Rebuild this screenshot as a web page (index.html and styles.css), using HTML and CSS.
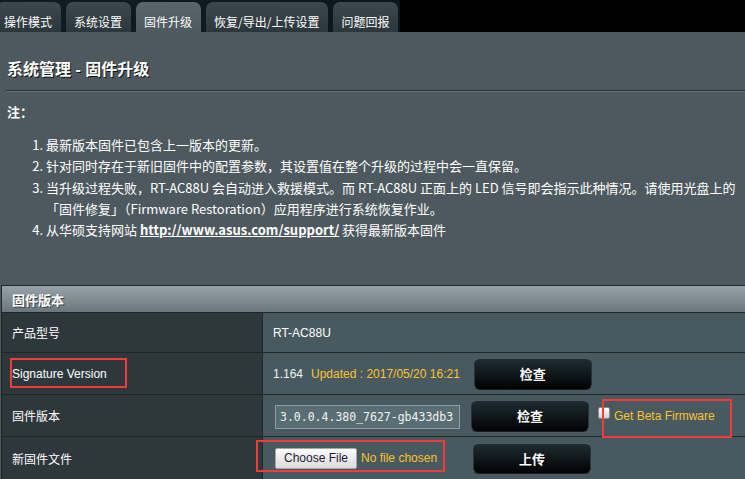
FILE: index.html
```html
<!DOCTYPE html>
<html lang="zh-CN">
<head>
<meta charset="utf-8">
<title>系统管理 - 固件升级</title>
<link rel="stylesheet" href="styles.css">
</head>
<body>
<div class="page">
  <nav class="tabs">
    <span class="tab tab-first">操作模式</span>
    <span class="tab">系统设置</span>
    <span class="tab tab-active">固件升级</span>
    <span class="tab">恢复/导出/上传设置</span>
    <span class="tab">问题回报</span>
  </nav>
  <main class="content">
    <h1 class="title">系统管理 - 固件升级</h1>
    <div class="sep"></div>
    <p class="note-label">注：</p>
    <ol class="notes">
      <li>最新版本固件已包含上一版本的更新。</li>
      <li>针对同时存在于新旧固件中的配置参数，其设置值在整个升级的过程中会一直保留。</li>
      <li>当升级过程失败，RT-AC88U 会自动进入救援模式。而 RT-AC88U 正面上的 LED 信号即会指示此种情况。请使用光盘上的<br>「固件修复」（Firmware Restoration）应用程序进行系统恢复作业。</li>
      <li>从华硕支持网站 <a class="link" href="#">http://www.asus.com/support/</a> 获得最新版本固件</li>
    </ol>

    <section class="fw">
      <div class="fw-head">固件版本</div>

      <div class="fw-label">产品型号</div>
      <div class="fw-value">RT-AC88U</div>

      <div class="fw-label">Signature Version</div>
      <div class="fw-value">
        <span class="sig-num">1.164</span>
        <span class="orange updated">Updated : 2017/05/20 16:21</span>
        <button class="btn btn-sig">检查</button>
      </div>

      <div class="fw-label">固件版本</div>
      <div class="fw-value">
        <input class="fw-input" type="text" value="3.0.0.4.380_7627-gb433db3" readonly>
        <button class="btn btn-check">检查</button>
        <input class="beta-check" type="checkbox">
        <span class="orange beta-text">Get Beta Firmware</span>
      </div>

      <div class="fw-label">新固件文件</div>
      <div class="fw-value">
        <label class="file">
          <input class="file-input" type="file">
          <span class="file-btn">Choose File</span>
          <span class="orange file-name">No file chosen</span>
        </label>
        <button class="btn btn-upload">上传</button>
      </div>

      <span class="mark mark-sig"></span>
      <span class="mark mark-beta"></span>
      <span class="mark mark-file"></span>
    </section>
  </main>
</div>
</body>
</html>
```

FILE: styles.css
```css
html, body {
  margin: 0;
  padding: 0;
  background: #000;
}

body {
  width: 745px;
  height: 479px;
  overflow: hidden;
  font-family: "Liberation Sans", Arial, "Noto Sans CJK SC", sans-serif;
  color: #fff;
}

.page {
  display: flex;
  flex-direction: column;
  height: 479px;
}

/* ---------- tabs ---------- */
.tabs {
  display: flex;
  align-items: flex-end;
  gap: 5px;
  height: 32px;
  flex: none;
  background: linear-gradient(90deg, #0f1d22 0, #0c171b 400px, #000 400px);
}

.tab {
  box-sizing: border-box;
  height: 30px;
  padding: 12px 9px 0 8px;
  line-height: 16px;
  font-size: 12px;
  font-family: "Noto Sans CJK SC", sans-serif;
  color: #fff;
  white-space: nowrap;
  border-radius: 7px 7px 0 0;
  background: linear-gradient(#3c484d, #2c373c);
}

.tab-first {
  margin-left: -4px;
}

.tab-active {
  background: linear-gradient(#58666b, #4e5a5f);
}

/* ---------- content ---------- */
.content {
  flex: 1;
  background: #4d595e;
  overflow: hidden;
}

.title {
  margin: 0;
  padding: 28px 0 0 7px;
  font-size: 16px;
  line-height: 20px;
  font-weight: bold;
  color: #fff;
  text-shadow: 1px 1px 0 #111;
}

.sep {
  margin: 10px 0 0 6px;
  border-top: 1px solid #283135;
  border-bottom: 1px solid #66737a;
}

.note-label {
  margin: 12px 0 0 7px;
  font-size: 13px;
  line-height: 16px;
  font-weight: bold;
  font-family: "Noto Sans CJK SC", sans-serif;
}

.notes {
  margin: 14px 0 0;
  padding-left: 46px;
  font-family: "Noto Sans CJK SC", sans-serif;
  font-size: 13px;
  line-height: 21.25px;
  white-space: nowrap;
  color: #fff;
}

.link {
  color: #fff;
  font-weight: bold;
  text-decoration: underline;
}

/* ---------- firmware table ---------- */
.fw {
  position: relative;
  width: 800px;
  margin: 45px 0 0 1px;
  display: grid;
  grid-template-columns: 260px 1fr;
  grid-template-rows: 26px 39px 41px 41px 42px;
  gap: 1px;
  background: #1f272b;
  border-top: 1px solid #1f272b;
  border-left: 1px solid #1f272b;
}

.fw-head {
  grid-column: 1 / -1;
  display: flex;
  align-items: center;
  padding-left: 10px;
  font-size: 13px;
  font-weight: bold;
  font-family: "Noto Sans CJK SC", sans-serif;
  background: linear-gradient(#96a2a7, #6b777c);
  text-shadow: 1px 1px 0 #3a4246;
}

.fw-label {
  display: flex;
  align-items: center;
  padding-left: 10px;
  font-size: 12px;
  background: #2e383c;
}

.fw-value {
  display: flex;
  align-items: center;
  padding-left: 10px;
  font-size: 12px;
  background: #485a5f;
}

.sig-num {
  color: #eef2f4;
}

.orange {
  color: #fbc22f;
}

.updated {
  margin-left: 8px;
}

.btn {
  box-sizing: border-box;
  width: 118px;
  height: 32px;
  padding: 0;
  border: 1px solid #2a3438;
  border-top-color: #505b60;
  border-bottom-color: #151b1e;
  border-radius: 6px;
  background: linear-gradient(#1f2c31, #020303);
  color: #fff;
  font-family: "Noto Sans CJK SC", sans-serif;
  font-size: 13px;
  font-weight: bold;
  text-shadow: 1px 1px 0 #000;
  cursor: pointer;
}

.btn-sig {
  margin-left: 14px;
}

.btn-check {
  margin-left: 11px;
}

.btn-upload {
  margin-left: 36px;
  height: 31px;
}

.fw-input {
  box-sizing: border-box;
  width: 185px;
  height: 24px;
  margin: 2px 0 0 2px;
  padding: 0 0 0 4px;
  border: 1px solid #8f9ea2;
  background: #596e74;
  color: #f2f2f2;
  font-family: "DejaVu Sans Mono", "Liberation Mono", monospace;
  font-size: 11.5px;
  outline: none;
}

.beta-check {
  appearance: none;
  -webkit-appearance: none;
  box-sizing: border-box;
  width: 12px;
  height: 12px;
  margin: 0 0 5px 9px;
  border: 1px solid #8c8c8c;
  border-radius: 2px;
  background: linear-gradient(#ffffff, #d2d2d2);
}

.beta-text {
  margin-left: 4px;
}

.file {
  display: flex;
  align-items: center;
  margin-left: 2px;
}

.file-input {
  display: none;
}

.file-btn {
  box-sizing: border-box;
  height: 21px;
  padding: 0 8px;
  line-height: 19px;
  border: 1px solid #a6a6a6;
  border-radius: 2px;
  background: linear-gradient(#fbfbfb, #dcdcdc);
  color: #1c1c38;
  font-size: 12px;
}

.file-name {
  margin-left: 4px;
}

/* ---------- red annotation boxes ---------- */
.mark {
  position: absolute;
  box-sizing: border-box;
  border: 2px solid #f23c3c;
  pointer-events: none;
}

.mark-sig {
  left: 8px;
  top: 72px;
  width: 117px;
  height: 30px;
}

.mark-beta {
  left: 600px;
  top: 113px;
  width: 130px;
  height: 39px;
}

.mark-file {
  left: 254px;
  top: 154px;
  width: 189px;
  height: 32px;
}
```
